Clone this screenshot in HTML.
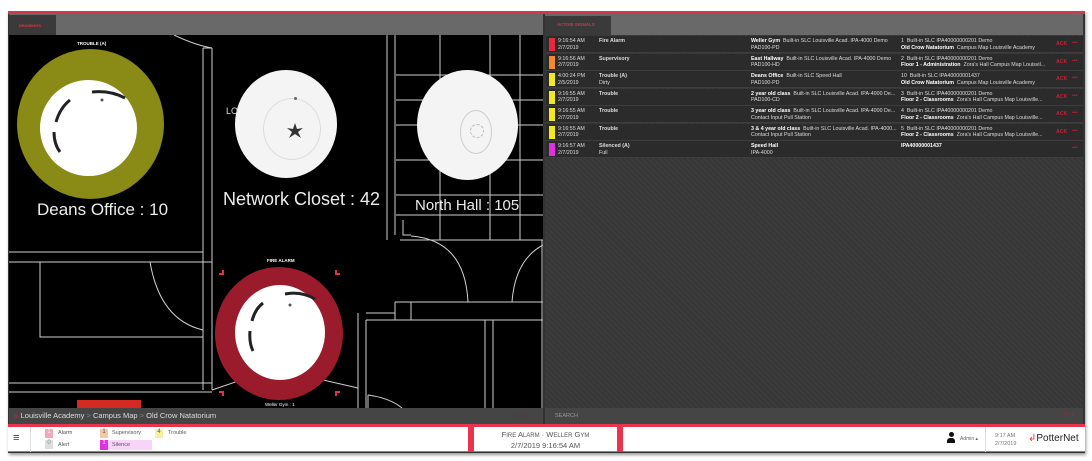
<!DOCTYPE html>
<html><head><meta charset="utf-8"><style>
*{margin:0;padding:0;box-sizing:border-box}
body{width:1092px;height:461px;background:#fff;position:relative;overflow:hidden;font-family:"Liberation Sans",sans-serif}
.a{position:absolute}
.row{position:absolute;left:546px;width:537px;height:17px;background:#2b2b2b;border-bottom:1px solid #3d3d3d;color:#ddd;font-size:5.3px;line-height:6.5px}
.row .c{position:absolute;left:3px;top:2px;width:6px;height:13px}
.row .t{position:absolute;left:12px;top:2px}
.row .s{position:absolute;left:53px;top:2px;font-weight:bold}
.row .d{position:absolute;left:205px;top:2px;white-space:nowrap}
.row .l{position:absolute;left:355px;top:2px;white-space:nowrap}
.row .k{position:absolute;left:510px;top:5px;color:#c0233a;font-weight:bold}
.row .m{position:absolute;left:526px;top:4px;color:#c0233a}
b{color:#fff}
.lbl{position:absolute;color:#ececec;white-space:nowrap}
.circ{position:absolute;border-radius:50%}
</style></head><body>
<div class="a" style="left:8px;top:11px;width:1077px;height:442px;background:#333;box-shadow:1px 2px 3px #999"></div>
<div class="a" style="left:8px;top:11px;width:1077px;height:3px;background:#d0394a"></div>
<div class="a" style="left:9px;top:14px;width:534px;height:21px;background:#696969"></div>
<div class="a" style="left:9px;top:15px;width:47px;height:20px;background:#3a3a3a;color:#d0394a;font-size:4px;font-weight:bold;padding:8px 0 0 10px">DRAWINGS</div>
<div class="a" style="left:545px;top:14px;width:538px;height:21px;background:#696969"></div>
<div class="a" style="left:545px;top:16px;width:66px;height:19px;background:#3a3a3a;color:#d0394a;font-size:4.5px;font-weight:bold;padding:6px 0 0 12px">ACTIVE SIGNALS</div>
<!-- map -->
<div class="a" style="left:9px;top:35px;width:534px;height:373px;background:#000;overflow:hidden">
<div class="a" style="left:-9px;top:-35px;width:543px;height:408px">
<svg width="543" height="408" style="position:absolute;left:0;top:0" fill="none" stroke="#cfcfcf" stroke-width="1">
<path d="M203 48V390M212 48V390M203 48L212 48M174 35Q195 45 212 48"/>
<path d="M8 252H203M8 262H212M40 262V337H203M8 383H212M8 392H212"/>
<path d="M150 262Q160 320 203 330"/>
<path d="M387 35V240M395 35V235M400 240H543"/>
<path d="M396 75H543M396 100H543M396 125H543M396 160H543M396 195H543M396 215H543M440 35V240M490 35V240M520 35V240"/>
<path d="M403 220V235H411M411 236Q465 240 468 302M543 245Q515 260 512 302"/>
<path d="M395 302H543M395 302V320M411 302V320M366 313H395M366 320H543M358 313V408M366 320V408M485 320V408M493 320V408M542 240V408"/>
<path d="M368 395V408M368 395Q390 398 402 408"/>
<path d="M212 390L250 377M310 377L358 388"/>
</svg>
<!-- deans -->
<div class="circ" style="left:17px;top:49px;width:147px;height:150px;background:#8a8a16"></div>
<div class="circ" style="left:40px;top:80px;width:97px;height:96px;background:#fff"></div>
<svg class="a" style="left:40px;top:80px" width="97" height="96" fill="none" stroke="#222" stroke-width="3"><path d="M30 20Q20 28 16 42M14 52Q14 64 20 72M85 18Q70 10 52 12"/><circle cx="62" cy="20" r="1.5" fill="#555" stroke="none"/></svg>
<div class="a" style="left:77px;top:41px;color:#fff;font-size:4.5px;font-weight:bold">TROUBLE (A)</div>
<div class="lbl" style="left:37px;top:200px;font-size:17px">Deans Office : 10</div>
<!-- network -->
<div class="circ" style="left:235px;top:70px;width:102px;height:108px;background:#f4f4f4"></div>
<div class="circ" style="left:263px;top:98px;width:58px;height:62px;border:1px solid #ddd"></div>
<svg class="a" style="left:286px;top:122px" width="18" height="18"><path d="M9 1L11 7L17 6L12 10L15 16L9 12L3 16L6 10L1 6L7 7Z" fill="#333"/></svg>
<div class="circ" style="left:294px;top:97px;width:3px;height:3px;background:#666"></div>
<div class="a" style="left:226px;top:106px;color:#ddd;font-size:9px">LO</div>
<div class="lbl" style="left:223px;top:189px;font-size:18px">Network Closet : 42</div>
<!-- north -->
<div class="circ" style="left:417px;top:70px;width:101px;height:110px;background:#f4f4f4"></div>
<div class="circ" style="left:460px;top:110px;width:32px;height:44px;border:1px solid #ccc"></div>
<div class="circ" style="left:470px;top:124px;width:14px;height:14px;border:1px dashed #bbb"></div>
<div class="lbl" style="left:415px;top:197px;font-size:15px">North Hall : 105</div>
<!-- fire -->
<div class="circ" style="left:215px;top:267px;width:128px;height:133px;background:#9a1c2c"></div>
<div class="circ" style="left:235px;top:285px;width:90px;height:95px;background:#fff"></div>
<svg class="a" style="left:235px;top:285px" width="90" height="95" fill="none" stroke="#222" stroke-width="3"><path d="M28 18Q20 24 17 36M15 46Q14 58 18 66M80 14Q66 6 50 9"/><circle cx="55" cy="20" r="1.5" fill="#555" stroke="none"/></svg>
<div class="a" style="left:267px;top:258px;color:#fff;font-size:4.5px;font-weight:bold">FIRE ALARM</div>
<div class="a" style="left:265px;top:402px;color:#fff;font-size:4.5px">Weller Gym : 1</div>
<div class="a" style="left:219px;top:270px;width:5px;height:5px;border-right:2px solid #e0304a;border-bottom:2px solid #e0304a"></div>
<div class="a" style="left:335px;top:270px;width:5px;height:5px;border-left:2px solid #e0304a;border-bottom:2px solid #e0304a"></div>
<div class="a" style="left:219px;top:391px;width:5px;height:5px;border-right:2px solid #e0304a;border-top:2px solid #e0304a"></div>
<div class="a" style="left:335px;top:391px;width:5px;height:5px;border-left:2px solid #e0304a;border-top:2px solid #e0304a"></div>
<div class="a" style="left:77px;top:400px;width:64px;height:8px;background:#d52a22"></div>
</div></div>
<!-- breadcrumb -->
<div class="a" style="left:9px;top:408px;width:534px;height:16px;background:#454545;color:#ddd;font-size:7.5px;padding:3px 0 0 5px"><span style="color:#b0243a">&#9679;</span> Louisville Academy <span style="color:#888">&gt;</span> Campus Map <span style="color:#888">&gt;</span> Old Crow Natatorium<span style="position:absolute;right:12px;top:3px;color:#6a2a33">&#9633; &#9633; &#9633;</span></div>
<!-- right panel -->
<div class="a" style="left:545px;top:35px;width:538px;height:373px;background:repeating-linear-gradient(45deg,#3c3c3c 0 2px,#363636 2px 4px)"></div>
<div class="a" style="left:545px;top:408px;width:538px;height:16px;background:#454545;color:#999;font-size:5.5px;padding:5px 0 0 10px">SEARCH<span style="position:absolute;right:8px;top:3px;color:#b0243a;font-size:7px">&#9661; &gt;</span></div>

<div class="row" style="top:36px"><div class="c" style="background:#e8283c"></div><div class="t">9:16:54 AM<br>2/7/2019</div><div class="s">Fire Alarm</div><div class="d"><b>Weller Gym</b> &nbsp;Built-in SLC Louisville Acad. IPA-4000 Demo<br>PAD100-PD</div><div class="l">1 &nbsp;Built-in SLC IPA40000000201 Demo<br><b>Old Crow Natatorium</b> &nbsp;Campus Map Louisville Academy</div><div class="k">ACK</div><div class="m">•••</div></div>
<div class="row" style="top:53.5px"><div class="c" style="background:#f08a2a"></div><div class="t">9:16:56 AM<br>2/7/2019</div><div class="s">Supervisory</div><div class="d"><b>East Hallway</b> &nbsp;Built-in SLC Louisville Acad. IPA-4000 Demo<br>PAD100-HD</div><div class="l">2 &nbsp;Built-in SLC IPA40000000201 Demo<br><b>Floor 1 - Administration</b> &nbsp;Zora's Hall Campus Map Louisvil...</div><div class="k">ACK</div><div class="m">•••</div></div>
<div class="row" style="top:71px"><div class="c" style="background:#f2ea1e"></div><div class="t">4:00:24 PM<br>2/5/2019</div><div class="s">Trouble (A)<br><span style="font-weight:normal">Dirty</span></div><div class="d"><b>Deans Office</b> &nbsp;Built-in SLC Speed Hall<br>PAD100-PD</div><div class="l">10 &nbsp;Built-in SLC IPA40000001437<br><b>Old Crow Natatorium</b> &nbsp;Campus Map Louisville Academy</div><div class="k">ACK</div><div class="m">•••</div></div>
<div class="row" style="top:88.5px"><div class="c" style="background:#f2ea1e"></div><div class="t">9:16:55 AM<br>2/7/2019</div><div class="s">Trouble</div><div class="d"><b>2 year old class</b> &nbsp;Built-in SLC Louisville Acad. IPA-4000 De...<br>PAD100-CD</div><div class="l">3 &nbsp;Built-in SLC IPA40000000201 Demo<br><b>Floor 2 - Classrooms</b> &nbsp;Zora's Hall Campus Map Louisville...</div><div class="k">ACK</div><div class="m">•••</div></div>
<div class="row" style="top:106px"><div class="c" style="background:#f2ea1e"></div><div class="t">9:16:55 AM<br>2/7/2019</div><div class="s">Trouble</div><div class="d"><b>3 year old class</b> &nbsp;Built-in SLC Louisville Acad. IPA-4000 De...<br>Contact Input Pull Station</div><div class="l">4 &nbsp;Built-in SLC IPA40000000201 Demo<br><b>Floor 2 - Classrooms</b> &nbsp;Zora's Hall Campus Map Louisville...</div><div class="k">ACK</div><div class="m">•••</div></div>
<div class="row" style="top:123.5px"><div class="c" style="background:#f2ea1e"></div><div class="t">9:16:55 AM<br>2/7/2019</div><div class="s">Trouble</div><div class="d"><b>3 &amp; 4 year old class</b> &nbsp;Built-in SLC Louisville Acad. IPA-4000...<br>Contact Input Pull Station</div><div class="l">5 &nbsp;Built-in SLC IPA40000000201 Demo<br><b>Floor 2 - Classrooms</b> &nbsp;Zora's Hall Campus Map Louisville...</div><div class="k">ACK</div><div class="m">•••</div></div>
<div class="row" style="top:141px"><div class="c" style="background:#e030e0"></div><div class="t">9:16:57 AM<br>2/7/2019</div><div class="s">Silenced (A)<br><span style="font-weight:normal">Full</span></div><div class="d"><b>Speed Hall</b><br>IPA-4000</div><div class="l"><b>IPA40000001437</b></div><div class="m">•••</div></div>

<!-- footer -->
<div class="a" style="left:8px;top:424px;width:1077px;height:3px;background:#e8344c"></div>
<div class="a" style="left:8px;top:427px;width:1077px;height:25px;background:#fff;border-bottom:1px solid #888"></div>
<div class="a" style="left:13px;top:432px;font-size:11px;color:#333">&#8801;</div>
<div class="a" style="left:30px;top:427px;width:1px;height:25px;background:#ddd"></div>
<div class="a" style="left:45px;top:429px;width:8px;height:9px;background:#f4a8b4;font-size:6px;color:#fff;text-align:center">1</div>
<div class="a" style="left:58px;top:430px;font-size:5.5px;color:#555">Alarm</div>
<div class="a" style="left:45px;top:440px;width:8px;height:9px;background:#ddd;font-size:6px;color:#888;text-align:center">0</div>
<div class="a" style="left:58px;top:442px;font-size:5.5px;color:#555">Alert</div>
<div class="a" style="left:100px;top:429px;width:8px;height:9px;background:#f5c9a0;font-size:6px;color:#555;text-align:center">1</div>
<div class="a" style="left:112px;top:430px;font-size:5.5px;color:#555">Supervisory</div>
<div class="a" style="left:100px;top:440px;width:52px;height:10px;background:#f8d4f8"></div>
<div class="a" style="left:100px;top:440px;width:8px;height:10px;background:#e030e0;font-size:6px;color:#fff;text-align:center">1</div>
<div class="a" style="left:112px;top:442px;font-size:5.5px;color:#555">Silence</div>
<div class="a" style="left:155px;top:429px;width:8px;height:9px;background:#f8f0a0;font-size:6px;color:#555;text-align:center">4</div>
<div class="a" style="left:168px;top:430px;font-size:5.5px;color:#555">Trouble</div>
<div class="a" style="left:468px;top:427px;width:6px;height:25px;background:#e8344c"></div>
<div class="a" style="left:617px;top:427px;width:6px;height:25px;background:#e8344c"></div>
<div class="a" style="left:474px;top:430px;width:143px;text-align:center;font-size:7.5px;color:#555;line-height:10px">F<span style="font-size:6px">IRE</span> A<span style="font-size:6px">LARM</span> · W<span style="font-size:6px">ELLER</span> G<span style="font-size:6px">YM</span><br>2/7/2019 9:16:54 AM</div>
<div class="a" style="left:947px;top:432px;width:8px;height:13px"><div style="width:5px;height:5px;border-radius:50%;background:#111;margin-left:1.5px"></div><div style="width:8px;height:5px;background:#111;margin-top:1px;border-radius:3px 3px 0 0"></div></div>
<div class="a" style="left:960px;top:436px;font-size:5px;color:#666">Admin ▴</div>
<div class="a" style="left:985px;top:427px;width:1px;height:25px;background:#ddd"></div>
<div class="a" style="left:995px;top:432px;font-size:5.5px;color:#777;line-height:8px">9:17 AM<br>2/7/2019</div>
<div class="a" style="left:1028px;top:433px;font-size:10px;color:#222"><span style="color:#e8344c">&#8626;</span>PotterNet</div>
</body></html>
